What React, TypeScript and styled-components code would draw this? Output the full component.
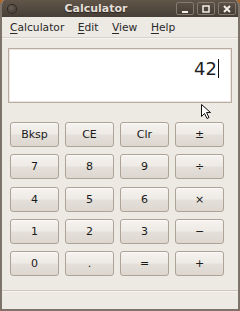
import React from 'react';
import styled, { createGlobalStyle } from 'styled-components';

const GlobalStyle = createGlobalStyle`
    html, body {
        margin: 0;
        padding: 0;
        background: #b5651d;
    }
    * {
        box-sizing: border-box;
    }
`;

const Window = styled.div`
    position: relative;
    width: 240px;
    height: 311px;
    display: flex;
    flex-direction: column;
    background: #ede9e3;
    border-radius: 5px 5px 2px 2px;
    overflow: hidden;
    border: 0 solid #7d736a;
    border-width: 0 2px 2px 2px;
    font-family: 'DejaVu Sans', 'Liberation Sans', sans-serif;
`;

const TitleBar = styled.div`
    height: 17px;
    margin: 0 -2px;
    display: flex;
    align-items: center;
    padding: 0 4px 0 8px;
    background: linear-gradient(#615549, #473f37);
    color: #e4dfd8;
`;

const WindowDot = styled.div`
    width: 8px;
    height: 8px;
    border-radius: 50%;
    background: radial-gradient(circle at 40% 35%, #6a5f55, #3b342e);
    box-shadow: 0 0 0 1px #2f2924;
`;

const Title = styled.div`
    flex: 1;
    text-align: center;
    font-weight: bold;
    font-size: 11px;
    text-shadow: 0 1px 1px #2a241f;
`;

const TitleButtons = styled.div`
    display: flex;
    gap: 3px;
`;

const TitleButton = styled.div`
    width: 18px;
    height: 13px;
    border: 1px solid #857a70;
    border-radius: 2px;
    background: linear-gradient(#5c5045, #463e36);
    display: flex;
    align-items: center;
    justify-content: center;
`;

const MenuBar = styled.div`
    height: 21px;
    display: flex;
    align-items: center;
    gap: 13.5px;
    padding: 1px 0 0 8px;
    font-size: 10.7px;
    color: #2a2a2a;
    border-bottom: 1px solid #d9d2ca;
    box-shadow: 0 1px 0 #f6f4f1;
`;

const MenuItem = styled.span`
    u {
        text-decoration: underline;
        text-underline-offset: 2px;
    }
`;

const Body = styled.div`
    flex: 1;
    padding: 10px 6px 0 6px;
    display: flex;
    flex-direction: column;
`;

const Display = styled.div`
    height: 55px;
    background: #ffffff;
    border: 1px solid #b8ada0;
    box-shadow: inset 0 0 0 1px #ebe6e0;
    display: flex;
    justify-content: flex-end;
    padding: 9px 12px 0 0;
    font-size: 18px;
    color: #1f1f1f;
`;

const Caret = styled.span`
    display: inline-block;
    width: 1px;
    height: 19px;
    margin: 1px 0 0 1px;
    background: #111;
`;

const Keypad = styled.div`
    margin: 19px 0 0 2px;
    display: grid;
    grid-template-columns: repeat(4, 49px);
    grid-auto-rows: 25px;
    column-gap: 6px;
    row-gap: 7.25px;
`;

const Key = styled.button`
    font-family: 'DejaVu Sans', 'Liberation Sans', sans-serif;
    font-size: 11px;
    color: #1a1a1a;
    padding: 0;
    border: 1px solid #aea397;
    border-radius: 3px;
    background: linear-gradient(#f5f3f0 0%, #eeeae5 48%, #e4dfd9 52%, #ddd7d0 100%);
    box-shadow: inset 0 1px 0 #fbfaf8;
`;

const Footer = styled.div`
    height: 19px;
    border-top: 1px solid #cfc7be;
    box-shadow: inset 0 1px 0 #f7f5f2;
`;

const Pointer = styled.svg`
    position: absolute;
    left: 198px;
    top: 103px;
`;

const keys = ['Bksp', 'CE', 'Clr', '±', '7', '8', '9', '÷', '4', '5', '6', '×', '1', '2', '3', '−', '0', '.', '=', '+'];

export default function App() {
    return (
        <>
            <GlobalStyle />
            <Window>
                <TitleBar>
                    <WindowDot />
                    <Title>Calculator</Title>
                    <TitleButtons>
                        <TitleButton>
                            <svg width="8" height="8" viewBox="0 0 8 8">
                                <rect x="1" y="6" width="6" height="2" fill="#f2eee9" />
                            </svg>
                        </TitleButton>
                        <TitleButton>
                            <svg width="8" height="8" viewBox="0 0 8 8">
                                <rect x="1" y="1" width="6" height="6" fill="none" stroke="#f2eee9" strokeWidth="1.5" />
                            </svg>
                        </TitleButton>
                        <TitleButton>
                            <svg width="8" height="8" viewBox="0 0 8 8">
                                <path d="M1 1 L7 7 M7 1 L1 7" stroke="#f2eee9" strokeWidth="2" />
                            </svg>
                        </TitleButton>
                    </TitleButtons>
                </TitleBar>
                <MenuBar>
                    <MenuItem><u>C</u>alculator</MenuItem>
                    <MenuItem><u>E</u>dit</MenuItem>
                    <MenuItem><u>V</u>iew</MenuItem>
                    <MenuItem><u>H</u>elp</MenuItem>
                </MenuBar>
                <Body>
                    <Display>
                        <span>42</span>
                        <Caret />
                    </Display>
                    <Keypad>
                        {keys.map((k) => (
                            <Key key={k}>{k}</Key>
                        ))}
                    </Keypad>
                </Body>
                <Footer />
                <Pointer width="12" height="17" viewBox="0 0 12 17">
                    <path d="M1.5 1.5 L1.5 13.5 L4.5 10.5 L7 15.5 L9 14.5 L6.5 9.5 L10.5 9.5 Z" fill="#fff" stroke="#111" strokeWidth="1" strokeLinejoin="round" />
                </Pointer>
            </Window>
        </>
    );
}
